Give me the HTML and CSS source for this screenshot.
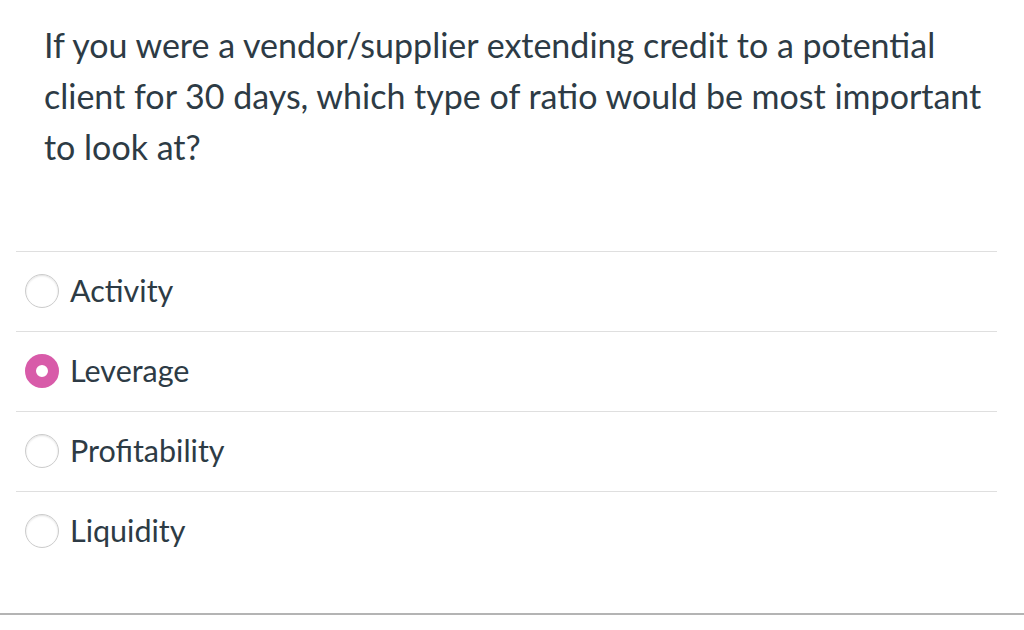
FILE: index.html
```html
<!DOCTYPE html>
<html>
<head>
<meta charset="utf-8">
<link rel="stylesheet" href="styles.css">
</head>
<body>
<div class="quiz">
  <div class="question">If you were a vendor/supplier extending credit to a potential client for 30 days, which type of ratio would be most important to look at?</div>
  <div class="answers">
    <div class="answer"><span class="radio"></span><span class="label">Activity</span></div>
    <div class="answer"><span class="radio selected"></span><span class="label">Leverage</span></div>
    <div class="answer"><span class="radio"></span><span class="label">Profitability</span></div>
    <div class="answer"><span class="radio"></span><span class="label">Liquidity</span></div>
  </div>
  <div class="footer"></div>
</div>
</body>
</html>
```
FILE: styles.css
```css
html, body {
  margin: 0;
  padding: 0;
  background: #fff;
}
body {
  font-family: Lato, "Open Sans", sans-serif;
  color: #2d3b45;
}
.quiz {
  width: 1024px;
  height: 630px;
  display: flex;
  flex-direction: column;
}
.question {
  padding: 19px 30px 0 44px;
  font-size: 34px;
  line-height: 51px;
  height: 230px;
  box-sizing: border-box;
}
.answers {
  margin: 21px 27px 0 16px;
}
.answer {
  display: flex;
  align-items: center;
  height: 80px;
  box-sizing: border-box;
  border-top: 1px solid #dfdfdf;
  padding-left: 9px;
}
.radio {
  width: 34px;
  height: 34px;
  box-sizing: border-box;
  border-radius: 50%;
  border: 1.5px solid #cccccc;
  box-shadow: inset 0 1px 2px rgba(0,0,0,0.12);
  background: #fff;
  flex: none;
  margin-top: -2px;
}
.radio.selected {
  border: 11px solid #d85ba9;
  box-shadow: none;
}
.label {
  margin-left: 11px;
  font-size: 30.5px;
  margin-top: -4px;
}
.footer {
  margin-top: 42px;
  border-top: 2px solid #b4b4b4;
}
```
